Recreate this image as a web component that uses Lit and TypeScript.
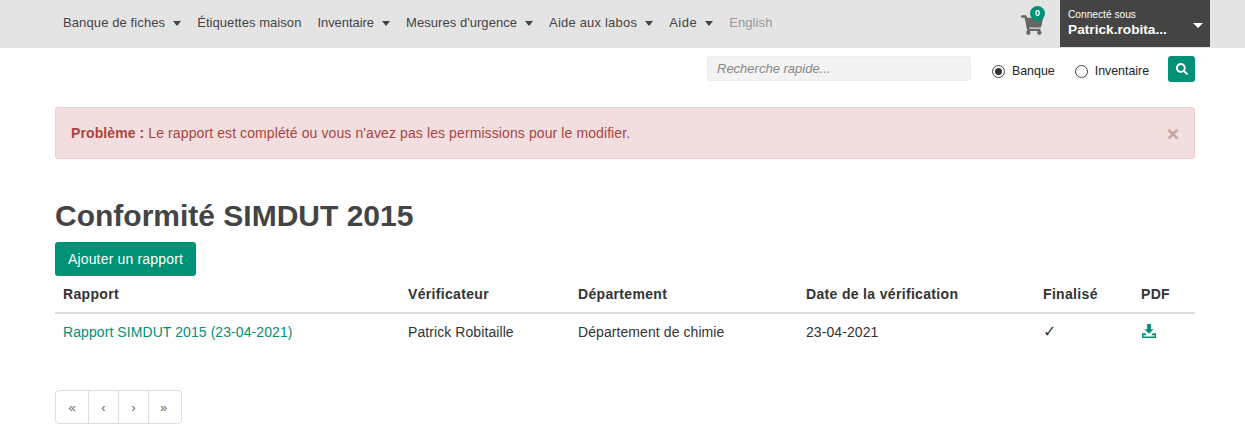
import { LitElement, html, css } from "lit";
import { customElement } from "lit/decorators.js";

const NAV: [string, boolean, number][] = [
  ["Banque de fiches", true, 0.11],
  ["Étiquettes maison", false, 0.05],
  ["Inventaire", true, -0.05],
  ["Mesures d'urgence", true, 0.05],
  ["Aide aux labos", true, 0.2],
  ["Aide", true, 0.5],
];

@customElement("app-root")
export class AppRoot extends LitElement {
  static styles = css`
    :host { display: block; width: 1245px; height: 448px; overflow: hidden; background: #fff; color: #212529;
      font-family: "Liberation Sans", Arial, sans-serif; font-size: 14px; line-height: 21px; }
    * { box-sizing: border-box; }
    .nav { display: flex; align-items: flex-start; height: 48px; background: #e4e4e4; padding-left: 55px; }
    .links { display: flex; align-items: center; height: 45px; flex: 1; }
    .link { display: flex; align-items: center; padding: 0 8px; color: #444; white-space: nowrap; font-size: 13px; }
    .link.off { color: #999; letter-spacing: 0.1px; }
    .caret { width: 0; height: 0; border: 4.5px solid transparent; border-top: 5px solid #444; border-bottom: 0; margin-left: 8px; margin-top: 1px; }
    .cart { position: relative; width: 22px; height: 22px; margin: 15px 17px 0 0; color: #666; }
    .cart svg { display: block; width: 22px; height: 20px; }
    .badge { position: absolute; left: 9px; top: -9px; width: 15px; height: 15px; border-radius: 50%; background: #009177;
      color: #fff; font-size: 9px; font-weight: 700; line-height: 15px; text-align: center; }
    .user { position: relative; width: 150px; height: 47px; margin-right: 35px; background: #444; color: #fff; padding: 8px 8px 0; }
    .user .small { font-size: 10.2px; line-height: 14px; }
    .user .name { font-size: 13.7px; font-weight: 700; line-height: 15px; }
    .user .caret { position: absolute; right: 7px; top: 23px; border-width: 5px; border-top: 5px solid #fff; border-bottom: 0; margin: 0; }
    .search { display: flex; align-items: flex-start; padding: 8px 50px 0 707px; height: 59px; }
    .input { width: 265px; height: 25px; background: #f3f3f3; border: 1px solid #eee; border-radius: 3px; color: #888;
      font-style: italic; font-size: 13px; line-height: 23px; padding-left: 9px; }
    .radio { display: flex; align-items: center; font-size: 12.4px; height: 29px; padding-top: 2px; color: #212529; }
    .radio.a { margin-left: 21px; }
    .radio.b { margin-left: 20px; margin-right: 19px; }
    .dot { width: 13px; height: 13px; border: 1px solid #444; border-radius: 50%; margin-right: 7px; display: flex; align-items: center; justify-content: center; }
    .dot i { width: 7px; height: 7px; background: #333; border-radius: 50%; display: block; }
    .sbtn { width: 27px; height: 26px; background: #009177; border-radius: 3px; display: flex; align-items: center; justify-content: center; }
    main { padding: 0 50px 0 55px; }
    .alert { height: 52px; background: #f2dede; border: 1px solid #ebccd1; border-radius: 3px; color: #a94442; letter-spacing: 0.1px;
      display: flex; align-items: center; justify-content: space-between; padding: 0 15px; }
    .alert .x { font-size: 21px; font-weight: 700; color: #c3a3a3; line-height: 21px; }
    h1 { margin: 39px 0 8px; font-size: 30px; line-height: 36px; font-weight: 700; color: #444; }
    .btn { display: inline-block; height: 34px; width: 141px; background: #009177; color: #fff; border-radius: 3px; text-align: center; line-height: 34px; letter-spacing: 0.17px; }
    table { width: 1140px; border-collapse: collapse; table-layout: fixed; display: table; }
    th { text-align: left; font-weight: 700; height: 37px; padding: 0 8px; border-bottom: 2px solid #ddd; color: #333; letter-spacing: 0.33px; }
    td { height: 37px; padding: 0 8px; color: #333; letter-spacing: 0.08px; }
    td a { color: #009177; }
    td .check { font-family: "DejaVu Sans", sans-serif; font-size: 16px; font-weight: 700; line-height: 16px; display: block; }
    .dl { display: block; margin: -2px 0 0 1px; }
    .pager { display: flex; width: 127px; height: 34px; margin-top: 40px; border: 1px solid #ddd; border-radius: 4px; color: #666; font-size: 13px; }
    .pager span { flex: 0 0 30px; display: flex; align-items: center; justify-content: center; border-left: 1px solid #ddd; }
    .pager span:first-child { flex: 0 0 32px; border-left: 0; }
  `;
  render() {
    return html`
      <div class="nav">
        <div class="links">
          ${NAV.map(([t, c, ls]) => html`<div class="link" style="letter-spacing:${ls}px">${t}${c ? html`<span class="caret"></span>` : ""}</div>`)}
          <div class="link off">English</div>
        </div>
        <div class="cart">
          <svg viewBox="0 0 576 512"><path fill="currentColor" d="M528 301.3l47.3-208C578.700 78.300 567.300 64 552 64H159.200l-9.200-44.800C147.800 8 137.900 0 126.500 0H24C10.700 0 0 10.700 0 24v16c0 13.300 10.700 24 24 24h69.900l70.200 343.400C147.300 417.100 136 435.200 136 456c0 30.900 25.100 56 56 56s56-25.100 56-56c0-15.700-6.400-29.800-16.800-40h209.600C430.400 426.200 424 440.300 424 456c0 30.900 25.100 56 56 56s56-25.100 56-56c0-22.200-12.900-41.300-31.600-50.400l5.500-24.300c3.400-15-8-29.300-23.400-29.300H218.100l-6.500-32h293c11.200 0 20.900-7.800 23.400-18.700z"/></svg>
          <span class="badge">0</span>
        </div>
        <div class="user">
          <div class="small">Connecté sous</div>
          <div class="name">Patrick.robita...</div>
          <span class="caret"></span>
        </div>
      </div>
      <div class="search">
        <div class="input">Recherche rapide...</div>
        <label class="radio a"><span class="dot"><i></i></span>Banque</label>
        <label class="radio b"><span class="dot"></span>Inventaire</label>
        <div class="sbtn">
          <svg width="12" height="12" viewBox="0 0 512 512"><path fill="#fff" d="M505 442.700L405.300 343c-4.500-4.500-10.600-7-17-7H372c27.600-35.300 44-79.700 44-128C416 93.100 322.900 0 208 0S0 93.100 0 208s93.100 208 208 208c48.300 0 92.700-16.400 128-44v16.300c0 6.400 2.500 12.500 7 17l99.700 99.700c9.400 9.400 24.600 9.400 33.900 0l28.300-28.300c9.400-9.400 9.400-24.600.1-34zM208 336c-70.700 0-128-57.200-128-128 0-70.700 57.200-128 128-128 70.700 0 128 57.200 128 128 0 70.700-57.200 128-128 128z"/></svg>
        </div>
      </div>
      <main>
        <div class="alert">
          <div><b>Problème :</b> Le rapport est complété ou vous n'avez pas les permissions pour le modifier.</div>
          <span class="x">×</span>
        </div>
        <h1>Conformité SIMDUT 2015</h1>
        <div class="btn">Ajouter un rapport</div>
        <table>
          <colgroup><col style="width:345px" /><col style="width:170px" /><col style="width:228px" /><col style="width:237px" /><col style="width:98px" /><col style="width:62px" /></colgroup>
          <thead><tr><th>Rapport</th><th>Vérificateur</th><th>Département</th><th>Date de la vérification</th><th>Finalisé</th><th>PDF</th></tr></thead>
          <tbody><tr>
            <td><a>Rapport SIMDUT 2015 (23-04-2021)</a></td>
            <td>Patrick Robitaille</td>
            <td>Département de chimie</td>
            <td>23-04-2021</td>
            <td><span class="check">✓</span></td>
            <td><svg class="dl" width="14" height="14" viewBox="0 0 15 15"><path fill="#009177" d="M5.500 0h4v5.500h3L7.500 10.500 2.500 5.500h3zM0 10h3.500l1.500 2h5l1.500-2H15v5H0z M1.500 12v1.500h12V12z" fill-rule="evenodd"/></svg></td>
          </tr></tbody>
        </table>
        <div class="pager"><span>«</span><span>‹</span><span>›</span><span>»</span></div>
      </main>
    `;
  }
}
